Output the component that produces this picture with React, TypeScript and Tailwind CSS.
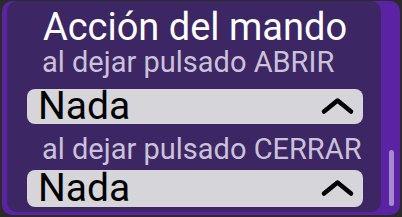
import React from "react";

function Chevron() {
  return (
    <svg width="35" height="19" viewBox="0 0 35 19" fill="none">
      <path d="M4 14.5 L17.5 3.5 L31 14.5" stroke="#000" strokeWidth="4.5" strokeLinecap="round" strokeLinejoin="round" />
    </svg>
  );
}

function Select({ h }: { h: string }) {
  return (
    <div className={`flex items-center justify-between ${h} rounded-[8px] bg-[#d6d5d9] pl-[11px] pr-[8px]`}>
      <span className="text-[39px] leading-none text-black">Nada</span>
      <Chevron />
    </div>
  );
}

export default function App() {
  return (
    <div className="w-[402px] h-[217px] bg-[#2b2b2b] pt-[1px] pl-[2px] pr-[2px] pb-[2px]" style={{ fontFamily: "Roboto, 'Noto Sans', sans-serif" }}>
      <div className="flex h-full rounded-[10px] bg-[#5b22a3] pl-[5px] pb-[3px]">
        <div className="flex-1 flex flex-col rounded-[10px] bg-[#3c2663] pl-[20px] pr-[18px] pt-[8px]">
          <div className="text-center text-white text-[38px] leading-[36px]">Acción del mando</div>
          <div className="mt-[2px] pl-[15px] text-[#cac2d8] text-[29px] leading-[30px]">al dejar pulsado ABRIR</div>
          <div className="mt-[12px]"><Select h="h-[35px]" /></div>
          <div className="mt-[10px] pl-[15px] text-[#cac2d8] text-[29px] leading-[30px]">al dejar pulsado CERRAR</div>
          <div className="mt-[6px]"><Select h="h-[37px]" /></div>
        </div>
        <div className="w-[19px] flex flex-col items-center justify-end pb-[6px] pl-[2px]">
          <div className="w-[5px] h-[56px] rounded-full bg-[#a58ad0]" />
        </div>
      </div>
    </div>
  );
}
